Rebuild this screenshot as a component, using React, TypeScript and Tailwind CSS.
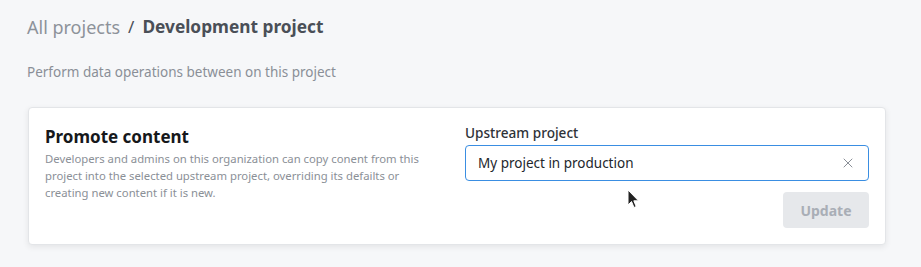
import { X } from 'lucide-react'

const font = { fontFamily: '"Noto Sans", "Open Sans", sans-serif' }

export default function App() {
	return (
		<div
			className="relative min-h-[267px] w-[921px] bg-[#f6f7f9] pt-[13px]"
			style={font}
		>
			<div className="flex items-center gap-2 pl-[27px] text-[18px] leading-7">
				<span className="text-[#8d929a]">All projects</span>
				<span className="text-[17px] text-[#4a4f57]">/</span>
				<span className="text-[17.3px] font-bold text-[#4a4f57]">
					Development project
				</span>
			</div>

			<p className="mt-[21px] pl-[27px] text-[13.5px] leading-5 text-[#8a8f97]">
				Perform data operations between on this project
			</p>

			<div className="ml-[28px] mt-[25px] flex w-[858px] gap-8 rounded border border-[#e3e5e8] bg-white px-4 pb-4 pt-[15px] shadow-[0_2px_6px_rgba(0,0,0,0.08)]">
				<div className="flex-1 pt-[2px]">
					<h2 className="text-[17px] font-bold leading-6 text-[#16181b]">
						Promote content
					</h2>
					<p className="mt-[1px] text-[11.3px] leading-[17px] text-[#8b9097]">
						Developers and admins on this organization can copy conent from this
						project into the selected upstream project, overriding its defailts
						or creating new content if it is new.
					</p>
				</div>

				<div className="flex w-[404px] flex-col">
					<label className="text-[13.6px] font-medium leading-5 text-[#2e3237]">
						Upstream project
					</label>
					<div className="mt-[2px] flex h-9 items-center rounded border border-[#3a8ee2] pl-3 pr-3">
						<span className="flex-1 text-[13.5px] text-[#22262b]">
							My project in production
						</span>
						<X className="h-4 w-4 text-[#8a8f97]" strokeWidth={1.5} />
					</div>
					<div className="mt-[11px] flex justify-end">
						<button className="h-9 w-[86px] rounded bg-[#e6e8eb] text-[14px] font-bold text-[#a9aeb6]">
							Update
						</button>
					</div>
				</div>
			</div>

			<svg
				className="absolute left-[627px] top-[189px]"
				width="14"
				height="21"
				viewBox="0 0 14 21"
			>
				<path
					d="M1 1 L1 16 L4.5 12.5 L7 18.5 L9.2 17.5 L6.8 11.8 L11.5 11.8 Z"
					fill="#222"
					stroke="#fff"
					strokeWidth="1"
					strokeLinejoin="round"
				/>
			</svg>
		</div>
	)
}
